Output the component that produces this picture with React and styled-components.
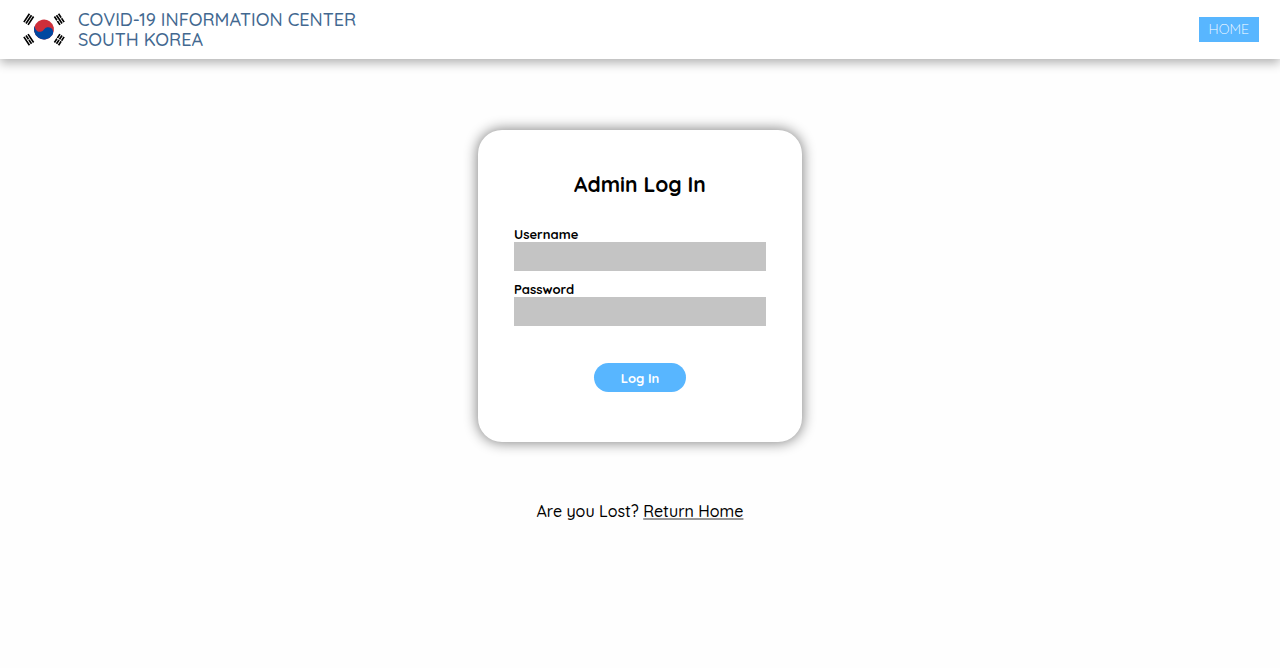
import React from "react";
import styled, { createGlobalStyle } from "styled-components";

const GlobalStyle = createGlobalStyle`
  * { box-sizing: border-box; }
  body {
    margin: 0;
    background: #fefefe;
    color: #000;
    font-family: Quicksand, Lato, "Open Sans", sans-serif;
  }
`;

const Header = styled.header`
  display: flex;
  align-items: center;
  justify-content: space-between;
  min-height: 59px;
  padding: 0 21px 0 14px;
  background: #fff;
  box-shadow: 0 4px 10px rgba(0, 0, 0, 0.3);
`;

const Brand = styled.div`
  display: flex;
  align-items: center;
  gap: 4px;
`;

const BrandName = styled.p`
  margin: 0;
  color: #426890;
  font-size: 18px;
  font-weight: 500;
  line-height: 20px;
`;

const FlagIcon = styled.svg`
  width: 60px;
  height: 41px;
`;

const NavLink = styled.a`
  display: block;
  padding: 0 10px;
  background: #58b6ff;
  color: #fff;
  font-size: 14px;
  font-weight: 300;
  line-height: 25px;
  text-decoration: none;
`;

const Main = styled.main`
  display: flex;
  flex-direction: column;
  align-items: center;
  padding: 71px 16px 32px;
`;

const Card = styled.form`
  display: flex;
  flex-direction: column;
  width: 100%;
  max-width: 324px;
  padding: 40px 36px 50px;
  border-radius: 24px;
  background: #fff;
  box-shadow: 0 0 13px 1px rgba(0, 0, 0, 0.48);
`;

const Title = styled.h1`
  margin: 0 0 28px;
  font-size: 21px;
  font-weight: 700;
  line-height: 28px;
  text-align: center;
`;

const Field = styled.label`
  display: flex;
  flex-direction: column;
  margin-bottom: 10px;
  font-size: 13px;
  font-weight: 700;
  line-height: 16px;
`;

const TextInput = styled.input`
  width: 100%;
  height: 29px;
  padding: 0 8px;
  border: 0;
  border-radius: 0;
  background: #c4c4c4;
  font: inherit;
`;

const SubmitButton = styled.button`
  align-self: center;
  width: 92px;
  height: 29px;
  margin-top: 27px;
  padding: 0;
  border: 0;
  border-radius: 15px;
  background: #58b6ff;
  color: #fff;
  font-family: inherit;
  font-size: 13px;
  font-weight: 700;
`;

const LostText = styled.p`
  margin: 59px 0 0;
  font-size: 16px;
  font-weight: 500;
  line-height: 20px;
`;

const HomeLink = styled.a`
  color: inherit;
  text-decoration: underline;
  text-decoration-color: #999;
  text-decoration-thickness: 2px;
  text-underline-offset: 1px;
  text-decoration-skip-ink: none;
`;

function Flag() {
  return (
    <FlagIcon viewBox="-36 -24 72 48" role="img" aria-label="Flag of South Korea">
      <g transform="rotate(-56.31)">
        <path d="M-6-25H6M-6-22H6M-6-19H6M-6 19H6M-6 22H6M-6 25H6" stroke="#000" strokeWidth="2" />
        <path d="M0 17v10" stroke="#fff" />
        <circle r="12" fill="#cd2e3a" />
        <path d="M0-12A6 6 0 0 0 0 0A6 6 0 0 1 0 12A12 12 0 0 1 0-12Z" fill="#0047a0" />
      </g>
      <g transform="rotate(-123.69)">
        <path d="M-6-25H6M-6-22H6M-6-19H6M-6 19H6M-6 22H6M-6 25H6" stroke="#000" strokeWidth="2" />
        <path d="M0-23.5v3M0 17v3.5M0 23.5v3" stroke="#fff" />
      </g>
    </FlagIcon>
  );
}

export default function App() {
  return (
    <>
      <GlobalStyle />
      <Header>
        <Brand>
          <Flag />
          <BrandName>
            COVID-19 INFORMATION CENTER
            <br />
            SOUTH KOREA
          </BrandName>
        </Brand>
        <nav>
          <NavLink href="#home">HOME</NavLink>
        </nav>
      </Header>
      <Main>
        <Card onSubmit={(event) => event.preventDefault()}>
          <Title>Admin Log In</Title>
          <Field htmlFor="username">
            Username
            <TextInput id="username" type="text" autoComplete="username" />
          </Field>
          <Field htmlFor="password">
            Password
            <TextInput id="password" type="password" autoComplete="current-password" />
          </Field>
          <SubmitButton type="submit">Log In</SubmitButton>
        </Card>
        <LostText>
          Are you Lost? <HomeLink href="#home">Return Home</HomeLink>
        </LostText>
      </Main>
    </>
  );
}
